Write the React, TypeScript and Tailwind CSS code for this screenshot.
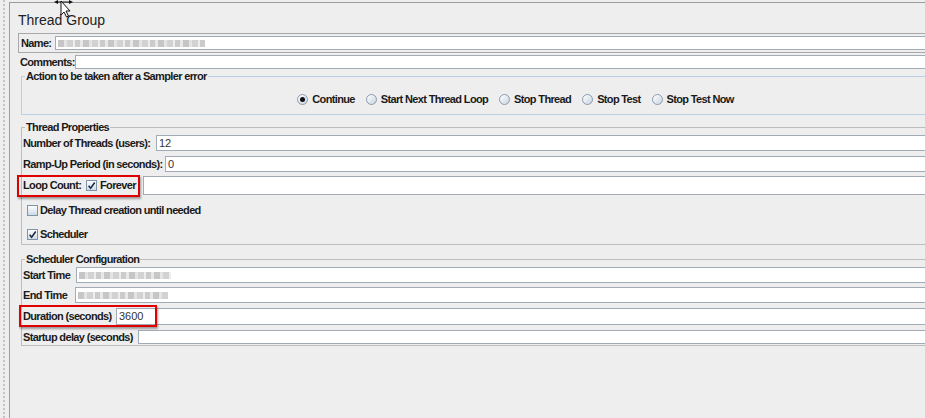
import React from "react";

const lbl =
  "text-[11px] leading-[13px] font-bold tracking-[-0.65px] text-[#1a1a1a] whitespace-nowrap";

const Input: React.FC<{ children?: React.ReactNode }> = ({ children }) => (
  <div className="flex-1 min-w-0 bg-white border border-[#a3acb6] flex items-center pl-[2px] text-[11px] text-[#333]">
    {children}
  </div>
);

const Blur: React.FC<{ w: string }> = ({ w }) => (
  <span
    className={`h-[7px] ${w} bg-[repeating-linear-gradient(90deg,#c6c6c6_0_6px,#e4e4e4_6px_9px,#d2d2d2_9px_15px,#ededed_15px_17px,#cbcbcb_17px_22px,#e8e8e8_22px_25px)]`}
  />
);

const Check: React.FC<{ checked?: boolean }> = ({ checked }) => (
  <span className="w-[11px] h-[11px] shrink-0 border border-[#7f93ab] bg-gradient-to-b from-[#fdfeff] to-[#cfdae6] flex items-center justify-center">
    {checked && (
      <svg viewBox="0 0 10 10" className="w-[9px] h-[9px]">
        <path d="M1.8 5.2 L4 8 L8.6 1.6" stroke="#1b2a40" strokeWidth="1.7" fill="none" />
      </svg>
    )}
  </span>
);

const Radio: React.FC<{ checked?: boolean }> = ({ checked }) => (
  <span className="w-[11px] h-[11px] shrink-0 rounded-full border border-[#8b9bb0] bg-gradient-to-br from-white to-[#c9d4e0] flex items-center justify-center">
    {checked && <span className="w-[5px] h-[5px] rounded-full bg-[#111]" />}
  </span>
);

const Row: React.FC<{
  label: string;
  labelW: string;
  h: string;
  mt: string;
  children?: React.ReactNode;
}> = ({ label, labelW, h, mt, children }) => (
  <div className={`flex ${h} ${mt}`}>
    <span className={`${lbl} ${labelW} shrink-0 flex items-center pl-[1px]`}>{label}</span>
    <Input>{children}</Input>
  </div>
);

const radios = [
  { label: "Continue", checked: true },
  { label: "Start Next Thread Loop" },
  { label: "Stop Thread" },
  { label: "Stop Test" },
  { label: "Stop Test Now" },
];

export default function App() {
  return (
    <div className="relative w-[925px] h-[418px] overflow-hidden bg-[#eeeeee] flex font-['Liberation_Sans',Arial,sans-serif]">
      {/* splitter */}
      <div className="w-[9px] shrink-0 pl-[3px]">
        <div className="h-full border-l-2 border-dotted border-[#c4c4c4]" />
      </div>

      {/* panel */}
      <div className="w-[1001px] shrink-0 mt-[2px] border-t border-l border-[#9c9c9c] pl-[8px] flex flex-col">
        <div className="mt-[9px] h-[17px] text-[14px] leading-[17px] text-[#222]">Thread Group</div>

        <div className="mt-[4px] border border-[#a8a8a8] flex py-[2px] pl-[1px]">
          <span className={`${lbl} w-[35px] shrink-0 flex items-center pl-[1px]`}>Name:</span>
          <div className="flex-1 h-[14px] bg-white border border-[#a3acb6] flex items-center pl-[2px]">
            <Blur w="w-[147px]" />
          </div>
        </div>

        <div className="mt-[2px] flex h-[14px] pl-[1px]">
          <span className={`${lbl} w-[56px] shrink-0 flex items-center pl-[1px]`}>Comments:</span>
          <Input />
        </div>

        <fieldset className="mt-[1px] ml-[3px] border border-[#b8cfe5]">
          <legend className={`${lbl} ml-[3px] px-[1px]`}>Action to be taken after a Sampler error</legend>
          <div className="pt-[9px] pb-[8px] flex justify-center">
            <div className="flex items-center h-[14px] gap-[11px]">
              {radios.map((r) => (
                <span key={r.label} className="flex items-center gap-[4px]">
                  <Radio checked={r.checked} />
                  <span className={lbl}>{r.label}</span>
                </span>
              ))}
            </div>
          </div>
        </fieldset>

        <fieldset className="mt-[6px] ml-[3px] border border-[#bdbdbd] pb-[3px]">
          <legend className={`${lbl} ml-[3px] px-[1px]`}>Thread Properties</legend>
          <Row label="Number of Threads (users):" labelW="w-[134px]" h="h-[16px]" mt="mt-[1px]">
            12
          </Row>
          <Row label="Ramp-Up Period (in seconds):" labelW="w-[143px]" h="h-[16px]" mt="mt-[5px]">
            0
          </Row>
          <div className="flex h-[19px] mt-[4px]">
            <div className="w-[121px] shrink-0 flex items-center pl-[1px]">
              <span className={`${lbl} w-[63px]`}>Loop Count:</span>
              <Check checked />
              <span className={`${lbl} ml-[3px]`}>Forever</span>
            </div>
            <Input />
          </div>
          <div className="flex items-center h-[14px] mt-[8px] pl-[5px] gap-[2px]">
            <Check />
            <span className={lbl}>Delay Thread creation until needed</span>
          </div>
          <div className="flex items-center h-[14px] mt-[10px] pl-[5px] gap-[2px]">
            <Check checked />
            <span className={lbl}>Scheduler</span>
          </div>
        </fieldset>

        <fieldset className="mt-[8px] ml-[3px] border border-[#bdbdbd] pb-[1px]">
          <legend className={`${lbl} ml-[3px] px-[1px]`}>Scheduler Configuration</legend>
          <Row label="Start Time" labelW="w-[54px]" h="h-[16px]" mt="mt-[1px]">
            <Blur w="w-[92px]" />
          </Row>
          <Row label="End Time" labelW="w-[53px]" h="h-[16px]" mt="mt-[4px]">
            <Blur w="w-[90px]" />
          </Row>
          <Row label="Duration (seconds)" labelW="w-[94px]" h="h-[17px]" mt="mt-[5px]">
            3600
          </Row>
          <Row label="Startup delay (seconds)" labelW="w-[116px]" h="h-[14px]" mt="mt-[5px]" />
        </fieldset>
      </div>

      {/* annotations */}
      <div className="absolute left-[17px] top-[175px] w-[123px] h-[22px] border-2 border-[#e00000] shadow-[1px_2px_2px_rgba(0,0,0,0.35)]" />
      <div className="absolute left-[19px] top-[305px] w-[138px] h-[22px] border-2 border-[#e00000] shadow-[1px_2px_2px_rgba(0,0,0,0.35)]" />

      {/* mouse cursor */}
      <svg className="absolute left-[53px] top-0" width="22" height="18" viewBox="0 0 22 18">
        <path d="M1 2 L5 0 L5 1.5 L16 1.5 L16 0 L20 2 L16 4 L16 2.5 L5 2.5 L5 4 Z" fill="#111" />
        <path d="M8 1 L8 15 L11 12 L13.5 17 L15.5 16 L13 11 L17 11 Z" fill="#fff" stroke="#111" strokeWidth="1" />
      </svg>
    </div>
  );
}
